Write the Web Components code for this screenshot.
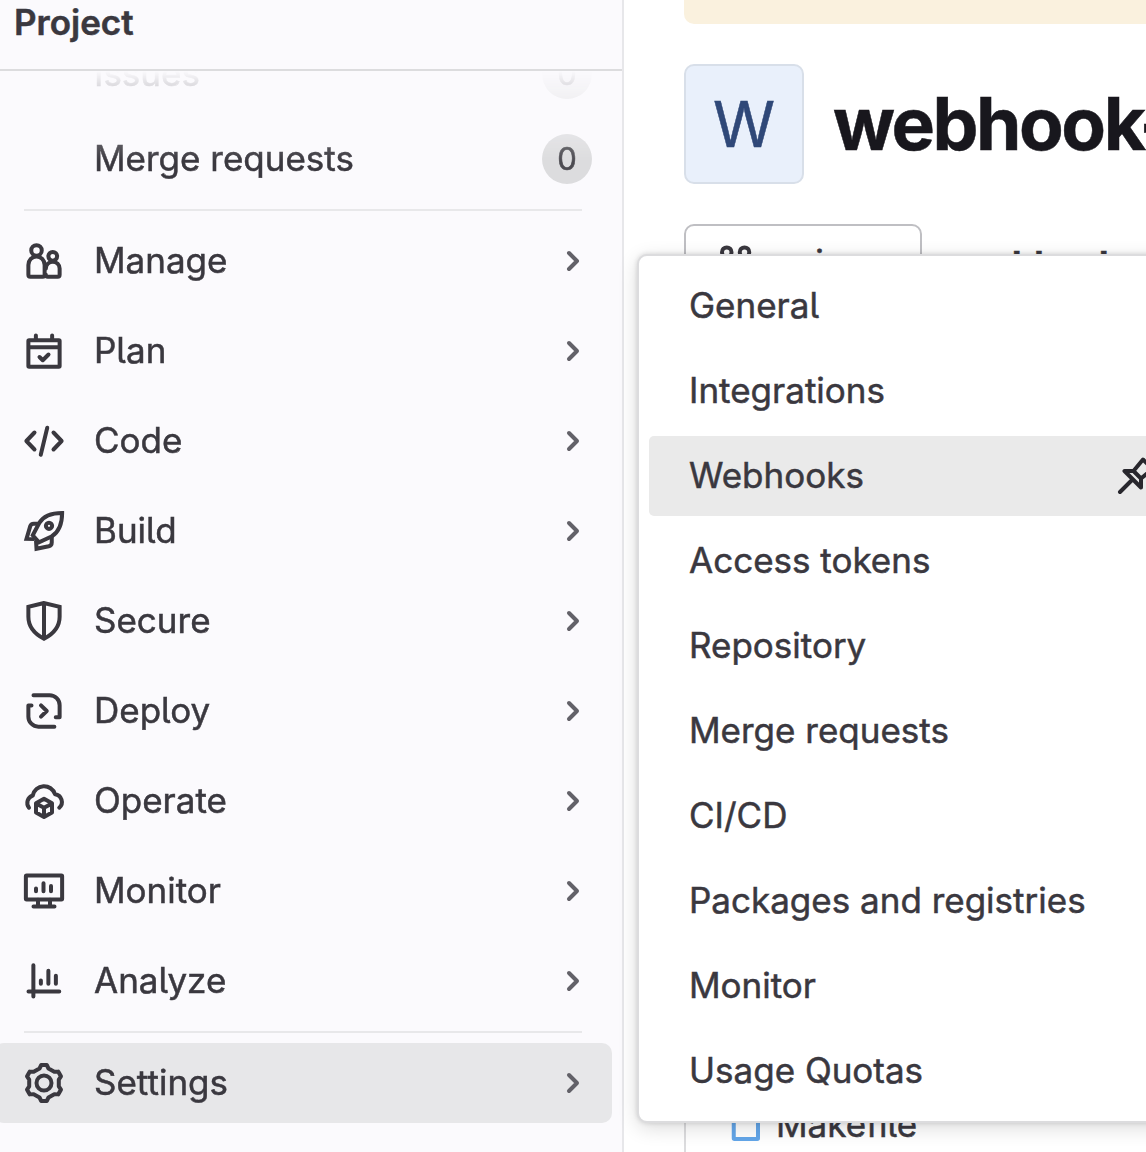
<!DOCTYPE html>
<html lang="en">
<head>
<meta charset="utf-8">
<title>Project</title>
<style>
  html, body { margin: 0; height: 1152px; overflow: hidden; background: #fff; }
  body { font: 400 35px/40px Inter, "Noto Sans", sans-serif; font-feature-settings: "cv05" 1; color: #3a383f; -webkit-text-stroke: .5px currentColor; }
</style>
</head>
<body>
<app-page></app-page>
<script>
const ICONS = {
  manage: '<circle cx="5" cy="3.75" r="2.1"/><path d="M1.75 9.6a3.25 3.4 0 0 1 6.5 0V13.5a.75.75 0 0 1-.75.75h-5a.75.75 0 0 1-.75-.75z"/><circle cx="11.5" cy="6.1" r="1.75"/><path d="M8.75 11a2.75 2.75 0 0 1 5.5 0v2.5a.75.75 0 0 1-.75.75h-4a.75.75 0 0 1-.75-.75"/>',
  plan: '<rect x="1.75" y="3.65" width="12.5" height="10.6" rx=".3"/><path d="M2 6.5h12M4.75 3.5V1.75M11.25 3.5V1.75M6.2 10.4l1.3 1.3 2.3-2.3"/>',
  code: '<path d="M4.2 4.6.95 8l3.25 3.4M11.8 4.6 15.05 8l-3.25 3.4M9.3 2.7 6.7 13.5"/>',
  build: '<g stroke-linecap="butt" stroke-linejoin="miter"><path d="M15.25.75C10.6.75 7.7 2 6.1 4.8L3.5 9.7l2.5 2.8 5-2.3C14.1 8.3 15.25 5.3 15.25.75z"/><path d="M6 5.05H3.9c-.8 0-1.2.3-1.4 1L1 11.15l3.2.1M11.1 10v2.6c0 .8-.4 1.3-1.2 1.5l-4.9 1-.2-3.3"/></g><circle cx="10" cy="5.9" r="1.25"/>',
  secure: '<path stroke-linejoin="miter" d="M8 .8 1.75 2.3v4c0 4 2.4 6.8 6.25 8.8 3.85-2 6.25-4.8 6.25-8.8v-4zM8 1v14"/>',
  deploy: '<path d="M3.8 1.7h6.45a4 4 0 0 1 4 4v4.75H12.7M3 5.75H1.75v4.5a4 4 0 0 0 4 4h6.4M6.8 5.75 9.1 8l-2.3 2.25"/>',
  operate: '<path d="M2 10.7A3.1 3.1 0 0 1 3.5 5.8a4.6 4.6 0 0 1 8.9-.5 3.1 3.1 0 0 1 1.7 5.4"/><path d="m8 7.1 3.2 1.8v3.7L8 14.4l-3.2-1.8V8.9zM5 9.1l3 1.6 3-1.6M8 10.7v3.5"/>',
  monitor: '<rect x=".75" y="1.75" width="14.5" height="9.6" rx=".3"/><path d="M5.6 11.5V14M10.4 11.5V14M3.8 14.15h8.4M4.8 7v1.1M7.8 4.9v3.2M10.8 6v2.1"/>',
  analyze: '<path d="M3.75 1.7v12.5M1.8 12.2h12.3M6.75 7.8v1.3M9.75 3.9v5.2M12.75 5.9v3.2"/>',
  settings: '<circle cx="8" cy="8" r="3"/><path transform="translate(8 8)" d="M-1.8-5.8-1.1-7.2H1.1L1.8-5.8 4.12-4.46 5.69-4.55 6.79-2.65 5.92-1.34V1.34L6.79 2.65 5.69 4.55 4.12 4.46 1.8 5.8 1.1 7.2H-1.1L-1.8 5.8-4.12 4.46-5.69 4.55-6.79 2.65-5.92 1.34V-1.34L-6.79-2.65-5.69-4.55-4.12-4.46z"/>',
  pin: '<path d="M.8 14.4 5.6 9.6M2.6 6H6.2L10 1.4 13.8 5.2 9.2 9v3.6zM6.2 6l3 3"/>',
  branch: '<circle cx="4.3" cy="3.25" r="1.9"/><circle cx="11.4" cy="3.25" r="1.9"/><path d="M4.3 5.2v8M11.4 5.2c0 3-7.1 2-7.1 6"/>',
  file: '<path d="M3.1 1.4H9.1l3.7 3.7v8.6a.3.3 0 0 1-.3.3H3.4a.3.3 0 0 1-.3-.3zM9 1.5v3.7h3.5"/>',
};

function define(name, render) {
  customElements.define(name, class extends HTMLElement {
    connectedCallback() {
      if (this.shadowRoot) return;
      this.attachShadow({ mode: 'open' }).innerHTML = render(this);
    }
  });
}

define('ui-icon', el => `
  <style>
    :host { display: block; flex: none; width: 40px; height: 40px; }
    svg { display: block; width: 100%; height: 100%; fill: none; stroke: currentColor;
      stroke-width: 1.6; stroke-linecap: round; stroke-linejoin: round; overflow: visible; }
  </style>
  <svg viewBox="0 0 16 16" aria-hidden="true">${ICONS[el.getAttribute('name')]}</svg>`);

define('count-badge', () => `
  <style>
    :host { display: flex; align-items: center; justify-content: center; width: 50px; height: 50px;
      border-radius: 25px; background: #dcdcde; color: #4c4b51; font-size: 31px; }
  </style><slot></slot>`);

define('nav-item', el => `
  <style>
    :host { display: flex; align-items: center; box-sizing: border-box; height: 80px; flex: none;
      margin: 0 11px 0 -6px; padding: 0 29px 0 30px; border-radius: 10px; }
    :host([active]) { background: #e7e7e9; }
    :host([pinned]) { padding-right: 20px; }
    .lead { width: 70px; flex: none; }
    .label { flex: 1; padding-bottom: 2px; }
    .chev { width: 20px; height: 24px; fill: none; stroke: #626168; stroke-width: 4;
      stroke-linecap: round; stroke-linejoin: round; }
  </style>
  <div class="lead">${el.hasAttribute('icon') ? `<ui-icon name="${el.getAttribute('icon')}"></ui-icon>` : ''}</div>
  <span class="label"><slot></slot></span>
  ${el.hasAttribute('pinned') ? '<count-badge>0</count-badge>' : '<svg class="chev" viewBox="0 0 20 24"><path d="M6 4 14 12 6 20"/></svg>'}`);

define('nav-rule', () => `
  <style>:host { display: block; flex: none; height: 2px; margin: 10px 40px 10px 24px; background: #e8e8ea; }</style>`);

define('side-bar', () => `
  <style>
    :host { display: flex; flex-direction: column; box-sizing: border-box; width: 624px; flex: none;
      height: 1152px; background: #fbfafd; border-right: 2px solid #e7e7ea; overflow: hidden; }
    header { box-sizing: border-box; height: 71px; flex: none; border-bottom: 2px solid #dcdcde;
      padding: 2px 14px; font-weight: 600; }
    nav { flex: 1; min-height: 0; overflow: hidden;
      mask-image: linear-gradient(transparent, rgba(0,0,0,.17) 16px, rgba(0,0,0,.84) 74px, #000 90px); }
    nav > div { display: flex; flex-direction: column; margin-right: -1px; }
    .pins { gap: 5px; margin-top: -37px; }
    .menu { gap: 10px; }
  </style>
  <header>Project</header>
  <nav>
    <div class="pins">
      <nav-item pinned>Issues</nav-item>
      <nav-item pinned>Merge requests</nav-item>
    </div>
    <nav-rule></nav-rule>
    <div class="menu">
      ${['Manage', 'Plan', 'Code', 'Build', 'Secure', 'Deploy', 'Operate', 'Monitor', 'Analyze']
        .map(n => `<nav-item icon="${n.toLowerCase()}">${n}</nav-item>`).join('')}
    </div>
    <nav-rule></nav-rule>
    <div><nav-item icon="settings" active>Settings</nav-item></div>
  </nav>`);

define('project-view', () => `
  <style>
    :host { display: flex; flex-direction: column; flex: 1; min-width: 0; height: 1152px;
      box-sizing: border-box; padding-left: 60px; overflow: hidden; background: #fff; white-space: nowrap; }
    .banner { height: 24px; flex: none; background: #faf1de; border-radius: 0 0 0 10px; }
    .title { display: flex; align-items: center; gap: 29px; margin: 40px 0; flex: none; }
    .avatar { display: flex; align-items: center; justify-content: center; box-sizing: border-box;
      width: 120px; height: 120px; flex: none; border: 2px solid #d8dfe9; border-radius: 10px;
      background: #e9f0fb; color: #2f4878; font-size: 63px; }
    h1 { margin: 0; font-size: 73px; line-height: 80px; font-weight: 650; letter-spacing: -.034em; color: #18171d; }
    .ref { display: flex; align-items: center; gap: 40px; flex: none; font-weight: 650; }
    .branch { display: flex; align-items: center; gap: 9px; box-sizing: border-box; width: 238px; height: 80px;
      border: 2px solid #bfbfc3; border-radius: 10px; padding-left: 30px; font-weight: 400; }
    .branch span { padding-bottom: 4px; }
    .files { flex: 1; margin-top: 40px; border-left: 2px solid #dcdcde; display: flex; flex-direction: column;
      justify-content: flex-end; }
    .row { display: flex; align-items: center; gap: 10px; padding: 0 0 8px 40px; }
    .row ui-icon { color: #63a6e9; }
  </style>
  <div class="banner"></div>
  <div class="title"><div class="avatar">W</div><h1>webhook-</h1></div>
  <div class="ref"><div class="branch"><ui-icon name="branch"></ui-icon><span>main</span></div><span>webhook-</span></div>
  <div class="files"><div class="row"><ui-icon name="file"></ui-icon><span>Makefile</span></div></div>`);

define('menu-item', el => `
  <style>
    :host { display: flex; align-items: center; justify-content: space-between; height: 80px;
      box-sizing: border-box; padding: 0 9px 0 40px; border-radius: 5px; white-space: nowrap; }
    :host([active]) { background: #eaeaea; }
    span { padding-bottom: 2px; }
    ui-icon { color: #28272d; }
  </style>
  <span><slot></slot></span>${el.hasAttribute('active') ? '<ui-icon name="pin"></ui-icon>' : ''}`);

define('fly-out', () => `
  <style>
    :host { display: flex; flex-direction: column; gap: 5px; box-sizing: border-box; width: 542px; height: 869px;
      padding: 10px; background: #fff; border: 2px solid #dcdcde; border-radius: 10px;
      box-shadow: 0 5px 20px rgba(5,5,6,.14), 0 0 5px rgba(5,5,6,.14); }
  </style>
  ${['General', 'Integrations', 'Webhooks', 'Access tokens', 'Repository', 'Merge requests', 'CI/CD',
     'Packages and registries', 'Monitor', 'Usage Quotas']
    .map(n => `<menu-item${n === 'Webhooks' ? ' active' : ''}>${n}</menu-item>`).join('')}`);

define('app-page', () => `
  <style>
    :host { display: flex; position: relative; width: 1146px; height: 1152px; overflow: hidden; }
    fly-out { position: absolute; left: 637px; top: 254px; }
  </style>
  <side-bar></side-bar><project-view></project-view><fly-out></fly-out>`);
</script>
</body>
</html>
